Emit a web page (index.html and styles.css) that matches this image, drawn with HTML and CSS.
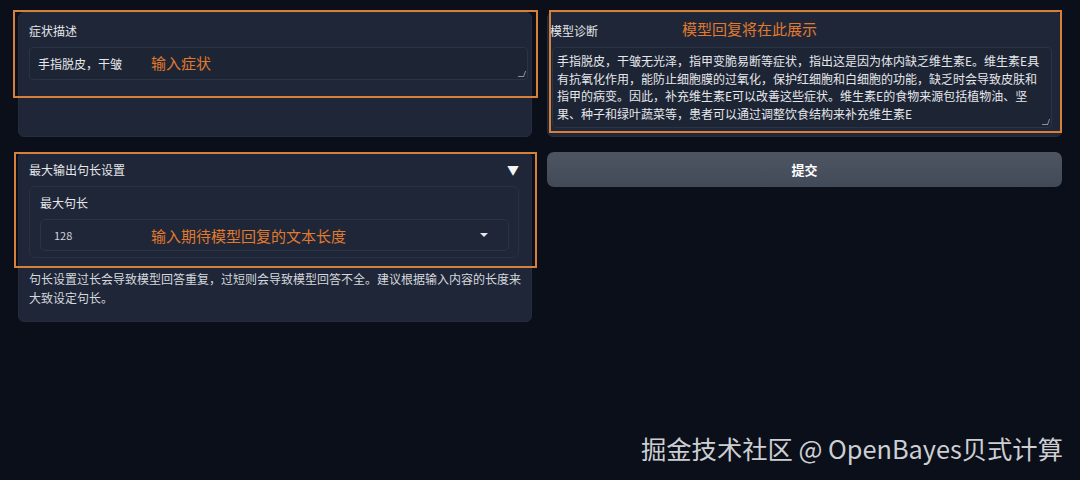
FILE: index.html
```html
<!DOCTYPE html>
<html lang="zh-CN">
<head>
    <meta charset="UTF-8">
    <meta name="viewport" content="width=device-width, initial-scale=1.0">
    <title>模型诊断</title>
    <link rel="stylesheet" href="styles.css">
</head>
<body>
    <div class="page">
        <div class="row">
            <div class="panel symptom">
                <label class="label">症状描述</label>
                <div class="textarea short">手指脱皮，干皱<span class="grip"></span></div>
            </div>
            <div class="panel result">
                <label class="label">模型诊断</label>
                <div class="textarea tall">手指脱皮，干皱无光泽，指甲变脆易断等症状，指出这是因为体内缺乏维生素E。维生素E具有抗氧化作用，能防止细胞膜的过氧化，保护红细胞和白细胞的功能，缺乏时会导致皮肤和指甲的病变。因此，补充维生素E可以改善这些症状。维生素E的食物来源包括植物油、坚果、种子和绿叶蔬菜等，患者可以通过调整饮食结构来补充维生素E<span class="grip"></span></div>
            </div>
        </div>

        <div class="row">
            <div class="panel settings">
                <div class="accordion-head">
                    <span>最大输出句长设置</span>
                    <span class="caret">▼</span>
                </div>
                <div class="block">
                    <label class="label">最大句长</label>
                    <div class="dropdown">
                        <span>128</span>
                        <span class="arrow"></span>
                    </div>
                </div>
                <p class="info">句长设置过长会导致模型回答重复，过短则会导致模型回答不全。建议根据输入内容的长度来大致设定句长。</p>
            </div>
            <div class="side">
                <button class="submit">提交</button>
            </div>
        </div>

        <!-- annotation boxes drawn over the screenshot -->
        <div class="note-box" style="left:13px; top:10px; width:525px; height:88px;"></div>
        <div class="note-box" style="left:549px; top:10px; width:513px; height:123px;"></div>
        <div class="note-box" style="left:14px; top:152px; width:523px; height:116px;"></div>
        <span class="note" style="left:151px; top:52px;">输入症状</span>
        <span class="note" style="left:682px; top:18px;">模型回复将在此展示</span>
        <span class="note" style="left:151px; top:225px;">输入期待模型回复的文本长度</span>
    </div>

    <div class="watermark">掘金技术社区 @ OpenBayes贝式计算</div>
</body>
</html>
```

FILE: styles.css
```css
body { margin: 0; background: #0b0f19; color: #e5e7eb; font-family: "Noto Sans CJK SC", "Noto Sans", sans-serif; width: 1080px; height: 480px; overflow: hidden; position: relative; }
.page { position: relative; padding: 12px 18px 0 18px; display: flex; flex-direction: column; gap: 15px; }
.row { display: grid; grid-template-columns: 514px 515px; gap: 15px; }
.panel { background: #1f2637; border-radius: 6px; border: 1px solid #252d3d; }
.label { display: block; font-size: 12px; color: #e5e7eb; line-height: 18px; }

.symptom { padding: 9px 3px 0 10px; height: 125px; box-sizing: border-box; }
.result { padding: 9px 9px 0 2px; height: 125px; box-sizing: border-box; }
.textarea { position: relative; margin-top: 7px; background: #1d2434; border: 1px solid #2b3444; border-radius: 4px; font-size: 12px; color: #e5e7eb; box-sizing: border-box; }
.short { height: 33px; padding: 6px 8px; line-height: 19px; }
.tall { margin-left: 2px; height: 81px; padding: 4px 4px 2px 4px; line-height: 17.5px; }
.grip { position: absolute; right: 2px; bottom: 2px; width: 5px; height: 5px; border-right: 1px solid #8a93a3; border-bottom: 1px solid #8a93a3; transform: skew(-20deg); }

.settings { padding: 8px 4px 9px 10px; box-sizing: border-box; height: 170px; }
.accordion-head { display: flex; justify-content: space-between; font-size: 12px; line-height: 18px; padding-right: 8px; }
.caret { font-size: 12px; color: #f3f4f6; }
.block { margin-top: 7px; margin-right: 8px; border: 1px solid #283041; border-radius: 6px; padding: 7px 9px 8px 10px; height: 72px; box-sizing: border-box; }
.dropdown { margin-top: 7px; height: 32px; border: 1px solid #2b3444; border-radius: 5px; display: flex; align-items: center; justify-content: space-between; padding: 0 20px 0 13px; font-size: 11px; color: #d1d5db; box-sizing: border-box; }
.arrow { width: 0; height: 0; border-left: 4px solid transparent; border-right: 4px solid transparent; border-top: 4px solid #e5e7eb; }
.info { margin: 11px 0 0 0; font-size: 12px; line-height: 19px; color: #d4d8de; }

.side { display: flex; flex-direction: column; }
.submit { height: 35px; border: none; border-radius: 7px; background: linear-gradient(#4d5563, #434a57); color: #ffffff; font-family: "Noto Sans CJK SC", sans-serif; font-size: 13px; font-weight: bold; }

.note-box { position: absolute; border: 2px solid #d7803c; box-sizing: border-box; }
.note { position: absolute; color: #e07a2e; font-size: 15px; line-height: 22px; }

.watermark { position: absolute; left: 641px; top: 430px; font-size: 25.3px; line-height: 37px; color: #cdcfd3; font-family: "Noto Sans CJK SC", "Noto Sans", sans-serif; }
```
